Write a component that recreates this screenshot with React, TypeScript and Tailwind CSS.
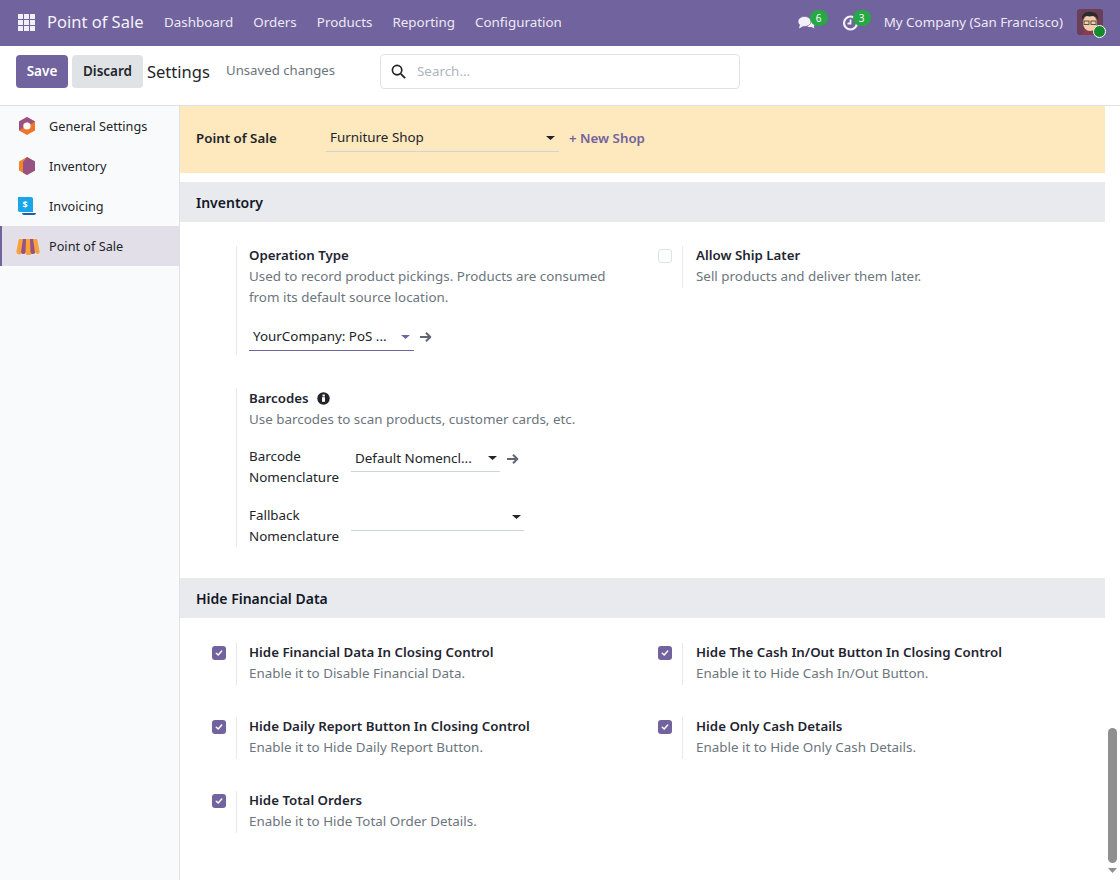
import React from "react";

const F = "font-['Noto_Sans',sans-serif]";

function Check({ on }: { on: boolean }) {
  return on ? (
    <div className="w-[14px] h-[14px] rounded-[3px] bg-[#71639e] flex items-center justify-center">
      <svg width="10" height="10" viewBox="0 0 10 10" fill="none"><path d="M2.3 5.2 4.2 7l3.5-4" stroke="#fff" strokeWidth="1.5" strokeLinecap="round" strokeLinejoin="round" /></svg>
    </div>
  ) : (
    <div className="w-[14px] h-[14px] rounded-[3px] border border-[#dee2e6] bg-white" />
  );
}

function Caret({ color = "#212529" }: { color?: string }) {
  return <svg width="9" height="4" viewBox="0 0 9 4" className="shrink-0"><path d="M0 0h9L4.500 4z" fill={color} /></svg>;
}

function Arrow() {
  return (
    <svg width="13" height="12" viewBox="0 0 13 12" fill="none" className="shrink-0">
      <path d="M1 6h10.500M7 1.800l4.300 4.200L7 10.200" stroke="#5f6770" strokeWidth="2" strokeLinejoin="round" />
    </svg>
  );
}

function Setting({ title, desc, on, right }: { title: string; desc: string; on?: boolean; right?: boolean }) {
  return (
    <div className="flex h-[42px]">
      <div className="w-[56px] shrink-0 pl-[32px] pt-[3px]">{on !== undefined && <Check on={on} />}</div>
      <div className={`border-l border-[#e7e9ed] ${right ? "pl-[13px]" : "pl-[12px]"}`}>
        <div className="font-semibold text-[13.300px] text-[#1f2530] leading-[21px] -mt-[1px]">{title}</div>
        <div className="text-[#6c757d] leading-[21px]">{desc}</div>
      </div>
    </div>
  );
}

function Header({ children }: { children: string }) {
  return <div className="h-[40px] bg-[#e9eaee] px-[16px] flex items-center font-semibold text-[14px] text-[#111827]">{children}</div>;
}

function GeneralIcon() {
  return (
    <svg width="20" height="20" viewBox="0 0 20 20">
      <path d="M10 1 18 5.500v9L10 19 2 14.500v-9z" fill="#f0742a" />
      <path d="M10 1 18 5.500 14 8 10 6 6 8v4l-4 2.500v-9z" fill="#985184" />
      <circle cx="10" cy="10" r="3.600" fill="#fff" />
    </svg>
  );
}
function InventoryIcon() {
  return (
    <svg width="20" height="20" viewBox="0 0 20 20">
      <path d="M10 1 18 5.500v9L10 19 2 14.500v-9z" fill="#f4862a" />
      <path d="M10 1l8 4.500v9L10 19l-4-2.300V6z" fill="#985184" />
    </svg>
  );
}
function InvoicingIcon() {
  return (
    <svg width="20" height="20" viewBox="0 0 20 20">
      <path d="M1 1h13c1.500 0 2 1 2 2v13H3c-1.500 0-2-1-2-2z" fill="#1aa5e8" />
      <path d="M7 19h10c1 0 2-1 2-2H5c0 1 1 2 2 2z" fill="#1a5fb4" />
      <text x="8" y="12" fontSize="9" fontWeight="700" fill="#fff" textAnchor="middle" fontFamily="Noto Sans, sans-serif">$</text>
    </svg>
  );
}
function PosIcon() {
  return (
    <svg width="24" height="17" viewBox="0 0 24 17">
      <path d="M4 1h16c1 0 1.300.500 1.500 1.500L23.500 13a2 2 0 0 1-4 1.500 2.300 2.300 0 0 1-4 0 2.600 2.600 0 0 1-6 0 2.300 2.300 0 0 1-4 0A2 2 0 0 1 .5 13L2.500 2.500C2.700 1.500 3 1 4 1z" fill="#f5a33a" />
      <path d="M7 1h3l-.500 13.500a2.400 2.400 0 0 1-4.500 0zM14 1h3l2 13.500a2.400 2.400 0 0 1-4.500 0z" fill="#985184" />
    </svg>
  );
}

function Avatar() {
  return (
    <div className="relative w-[26px] h-[26px]">
      <svg width="26" height="26" viewBox="0 0 26 26" className="rounded-[3px]">
        <rect width="26" height="26" fill="#6b3f57" />
        <path d="M5 26c0-5 3-7 8-7s8 2 8 7z" fill="#8a3b4d" />
        <ellipse cx="13" cy="14" rx="7" ry="8" fill="#f2cda8" />
        <path d="M5 11c-1-6 4-9 9-8 5 0 8 3 7 8-1-3-3-4-5-4-3 1-7 0-8 0-1 1-2 2-3 4z" fill="#2c2a2a" />
        <rect x="7" y="12" width="5" height="3.500" fill="none" stroke="#333" strokeWidth="0.8" />
        <rect x="14" y="12" width="5" height="3.500" fill="none" stroke="#333" strokeWidth="0.8" />
      </svg>
      <div className="absolute -right-[3px] -bottom-[3px] w-[13px] h-[13px] rounded-full bg-[#16892e] border border-white" />
    </div>
  );
}

export default function App() {
  const nav = ["Dashboard", "Orders", "Products", "Reporting", "Configuration"];
  const side: [string, React.ReactNode, boolean][] = [
    ["General Settings", <GeneralIcon />, false],
    ["Inventory", <InventoryIcon />, false],
    ["Invoicing", <InvoicingIcon />, false],
    ["Point of Sale", <PosIcon />, true],
  ];
  return (
    <div className={`${F} h-[880px] w-[1120px] overflow-hidden flex flex-col text-[13.400px] text-[#212529] bg-white`}>
      <nav className="h-[46px] shrink-0 bg-[#71639e] flex items-center text-white pb-[2px]">
        <div className="pl-[18px] w-[47px] shrink-0">
          <div className="grid grid-cols-3 gap-[1px] w-[17px]">
            {Array.from({ length: 9 }).map((_, i) => <div key={i} className="w-[5px] h-[5px] bg-[#f1eff6]" />)}
          </div>
        </div>
        <div className="text-[16.500px] w-[117px] shrink-0 text-[#f4f2f8]">Point of Sale</div>
        <div className="flex gap-[20px] text-[#ece9f3]">
          {nav.map((n) => <span key={n}>{n}</span>)}
        </div>
        <div className="ml-auto flex items-center">
          <div className="relative w-[20px] h-[20px] mr-[24px]">
            <svg width="20" height="20" viewBox="0 0 20 20">
              <path d="M12 9h2.500c2.200 0 3.500 1.300 3.500 3 0 1-.500 1.800-1.300 2.300l.8 2.200-3-1.500H10.500z" fill="#f4f2f8" />
              <ellipse cx="7.500" cy="9.500" rx="6.500" ry="5" fill="#f4f2f8" stroke="#71639e" strokeWidth="0.600" />
              <path d="M3 12.500 2 16.500l4.500-2.500z" fill="#f4f2f8" />
            </svg>
            <span className="absolute left-[13px] -top-[2px] h-[16px] w-[18px] rounded-full bg-[#28a745] text-white text-[10px] leading-[16px] text-center">6</span>
          </div>
          <div className="relative w-[20px] h-[20px] mr-[23px]">
            <svg width="20" height="20" viewBox="0 0 20 20" fill="none">
              <circle cx="9.500" cy="11" r="6.500" stroke="#f4f2f8" strokeWidth="2.200" />
              <path d="M9.500 7.500v4H6.500" stroke="#f4f2f8" strokeWidth="1.800" />
            </svg>
            <span className="absolute left-[12px] -top-[2px] h-[16px] w-[18px] rounded-full bg-[#28a745] text-white text-[10px] leading-[16px] text-center">3</span>
          </div>
          <span className="text-[#ece9f3] mr-[14px]">My Company (San Francisco)</span>
          <div className="mr-[17px]"><Avatar /></div>
        </div>
      </nav>

      <div className="h-[60px] shrink-0 border-b border-[#dee2e6] flex items-start pt-[9px] pl-[16px]">
        <button className="h-[33px] w-[52px] rounded-[4px] bg-[#71639e] text-white font-semibold text-[13.500px]">Save</button>
        <button className="h-[33px] w-[71px] ml-[4px] rounded-[4px] bg-[#e0e3e6] text-[#212529] font-semibold text-[13.500px]">Discard</button>
        <span className="text-[16.500px] ml-[4px] w-[79px] leading-[33px]">Settings</span>
        <span className="text-[#6c757d] text-[13.200px] w-[154px] leading-[33px] -mt-[1px]">Unsaved changes</span>
        <div className="w-[360px] h-[35px] -mt-[1px] border border-[#dee2e6] rounded-[4px] flex items-center pl-[10px]">
          <svg width="15" height="15" viewBox="0 0 16 16" fill="none"><circle cx="6.500" cy="6.500" r="5" stroke="#212529" strokeWidth="1.800" /><path d="M10.500 10.500 15 15" stroke="#212529" strokeWidth="2" /></svg>
          <span className="ml-[11px] text-[#adb5bd]">Search...</span>
        </div>
      </div>

      <div className="flex flex-1 min-h-0">
        <aside className="w-[180px] shrink-0 bg-[#f9fafb] border-r border-[#dee2e6]">
          {side.map(([t, icon, active]) => (
            <div key={t} className={`h-[40px] flex items-center ${active ? "bg-[#e2dfe9] border-l-2 border-[#71639e]" : ""}`}>
              <div className={`flex shrink-0 ${active ? "w-[47px] pl-[14px]" : "w-[49px] pl-[17px]"}`}>{icon}</div>
              <span className="text-[12.700px] pt-[1px]">{t}</span>
            </div>
          ))}
        </aside>

        <main className="w-[925px] shrink-0">
          <div className="h-[67px] bg-[#fee8bd] flex items-start pt-[18px] pl-[16px]">
            <span className="font-semibold text-[13.300px] w-[130px] leading-[28px]">Point of Sale</span>
            <div className="w-[233px] h-[28px] border-b border-[#ced4da] flex items-center pl-[4px] pr-[4px] justify-between">
              <span>Furniture Shop</span><Caret />
            </div>
            <span className="ml-[10px] font-semibold text-[13.300px] text-[#71639e] leading-[28px]">+ New Shop</span>
          </div>
          <div className="h-[9px]" />
          <Header>Inventory</Header>

          <div className="flex pt-[24px] h-[356px]">
            <div className="w-[447px] shrink-0">
              <div className="flex">
                <div className="w-[56px] shrink-0" />
                <div className="border-l border-[#e7e9ed] pl-[12px] w-[391px] pb-[4px]">
                  <div className="font-semibold text-[13.300px] text-[#1f2530] leading-[21px] -mt-[1px]">Operation Type</div>
                  <div className="text-[#6c757d] leading-[21px] mr-[10px]">Used to record product pickings. Products are consumed from its default source location.</div>
                  <div className="flex items-center mt-[15px]">
                    <div className="w-[165px] h-[28px] border-b border-[#71639e] flex items-center justify-between pl-[4px] pr-[4px]">
                      <span>YourCompany: PoS ...</span><Caret color="#71639e" />
                    </div>
                    <span className="ml-[5px]"><Arrow /></span>
                  </div>
                </div>
              </div>
              <div className="flex mt-[33px]">
                <div className="w-[56px] shrink-0" />
                <div className="border-l border-[#e7e9ed] pl-[12px]">
                  <div className="font-semibold text-[13.300px] text-[#1f2530] leading-[21px] flex items-center">
                    Barcodes
                    <svg width="13" height="13" viewBox="0 0 13 13" className="ml-[8px]"><circle cx="6.500" cy="6.500" r="6.200" fill="#212529" /><rect x="5" y="5.200" width="3" height="4.600" fill="#fff" /><rect x="5.500" y="2.500" width="2.300" height="2" fill="#fff" /></svg>
                  </div>
                  <div className="text-[#6c757d] leading-[21px]">Use barcodes to scan products, customer cards, etc.</div>
                  <div className="flex mt-[15px]">
                    <div className="leading-[21px] w-[102px] mt-[1px]">Barcode<br />Nomenclature</div>
                    <div className="flex items-start">
                      <div className="w-[149px] h-[27px] border-b border-[#ced4da] flex items-center justify-between pl-[4px] pr-[3px]">
                        <span>Default Nomencl...</span><Caret />
                      </div>
                      <span className="ml-[6px] mt-[8px]"><Arrow /></span>
                    </div>
                  </div>
                  <div className="flex mt-[16px]">
                    <div className="leading-[21px] w-[102px] mt-[1px]">Fallback<br />Nomenclature</div>
                    <div className="w-[173px] h-[27px] border-b border-[#ced4da] flex items-center justify-end pr-[3px]"><Caret /></div>
                  </div>
                </div>
              </div>
            </div>
            <div className="flex-1 -ml-[1px]">
              <Setting right title="Allow Ship Later" desc="Sell products and deliver them later." on={false} />
            </div>
          </div>

          <Header>Hide Financial Data</Header>
          <div className="grid grid-cols-[446px_1fr] gap-y-[32px] pt-[25px]">
            <Setting on title="Hide Financial Data In Closing Control" desc="Enable it to Disable Financial Data." />
            <Setting on right title="Hide The Cash In/Out Button In Closing Control" desc="Enable it to Hide Cash In/Out Button." />
            <Setting on title="Hide Daily Report Button In Closing Control" desc="Enable it to Hide Daily Report Button." />
            <Setting on right title="Hide Only Cash Details" desc="Enable it to Hide Only Cash Details." />
            <Setting on title="Hide Total Orders" desc="Enable it to Hide Total Order Details." />
          </div>
        </main>

        <div className="w-[15px] shrink-0 bg-white flex flex-col items-center">
          <div className="mt-[622px] w-[9px] h-[135px] rounded-full bg-[#8f8f8f] ml-[-1px]" />
          <svg width="9" height="5" viewBox="0 0 9 5" className="mt-[5px]"><path d="M0 0h9L4.500 5z" fill="#8f8f8f" /></svg>
        </div>
      </div>
    </div>
  );
}
